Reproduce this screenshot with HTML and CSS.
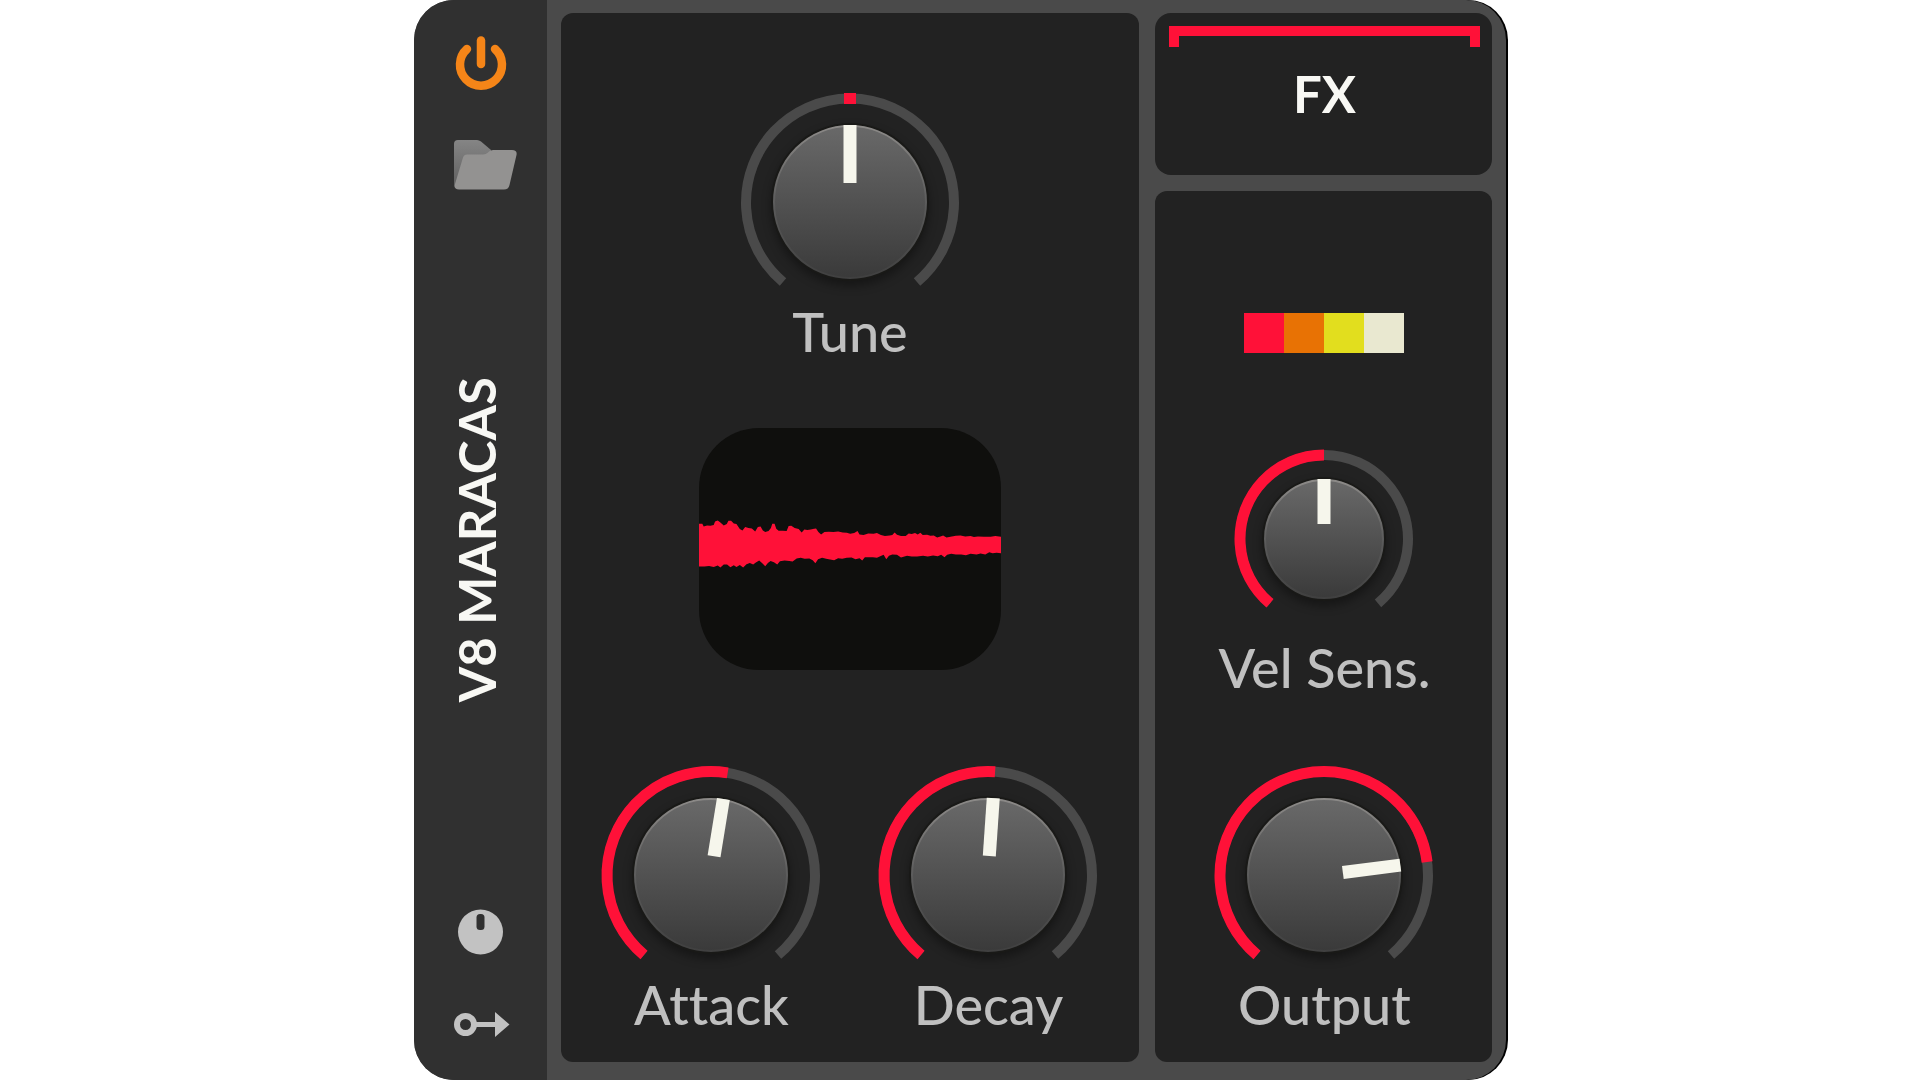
FILE: index.html
```html
<!DOCTYPE html>
<html lang="en">
<head>
  <meta charset="UTF-8">
  <meta name="viewport" content="width=device-width, initial-scale=1.0">
  <title>V8 Maracas</title>
  <link rel="stylesheet" href="styles.css">
</head>
<body>
  <!-- gradients shared by all knobs -->
  <svg class="defs" width="0" height="0" aria-hidden="true">
    <defs>
      <linearGradient id="cap-fill" x1="0" y1="0" x2="0" y2="1">
        <stop offset="0" stop-color="#696969"/>
        <stop offset="1" stop-color="#3a3a3a"/>
      </linearGradient>
      <linearGradient id="cap-rim" x1="0" y1="0" x2="0" y2="1">
        <stop offset="0" stop-color="#8c8a88"/>
        <stop offset="0.5" stop-color="#5c5c5c"/>
        <stop offset="1" stop-color="#404040"/>
      </linearGradient>
      <linearGradient id="folder-back" x1="0" y1="0" x2="0" y2="1">
        <stop offset="0" stop-color="#858585"/>
        <stop offset="1" stop-color="#5e5e5e"/>
      </linearGradient>
    </defs>
  </svg>
  <main class="device">
    <aside class="sidebar">
      <div class="tools">
        <button class="tool" aria-label="Power">
          <svg width="72" height="54" viewBox="0 0 72 54" fill="none" stroke="#f58518" stroke-width="8.5" stroke-linecap="round">
            <path d="M22 13 A21 21 0 1 0 50 13"/>
            <path d="M36 4.5 V28"/>
          </svg>
        </button>
        <button class="tool" aria-label="Open preset">
          <svg width="72" height="52" viewBox="0 0 72 52">
            <path d="M9 5 Q9 1 13 1 H32 Q34 1 36 2.500 L46 11 V24 L14 50 Q9 50 9 46 Z" fill="url(#folder-back)"/>
            <path d="M22 15.500 H38 Q41 15.500 43 13.500 L44 12.500 Q46 11 48 11 H67 Q72.500 11 71.500 16 L64.500 46 Q63.500 50.500 59 50.500 H14 Q8.500 50.500 10 45 L18 18.500 Q19 15.500 22 15.500 Z" fill="#939291"/>
          </svg>
        </button>
      </div>
      <h1 class="title">V8 MARACAS</h1>
      <div class="tools tools-bottom">
        <button class="tool" aria-label="Remote controls">
          <svg width="72" height="46" viewBox="0 0 72 46">
            <circle cx="35.500" cy="23" r="22.500" fill="#c2c2c2"/>
            <rect x="31.500" y="5" width="8" height="16" rx="3.500" fill="#303030"/>
          </svg>
        </button>
        <button class="tool" aria-label="Modulation">
          <svg width="72" height="40" viewBox="0 0 72 40">
            <circle cx="20.500" cy="20.500" r="8.500" fill="none" stroke="#c2c2c2" stroke-width="6"/>
            <path d="M31 18 H50 V8 L64.500 20.500 L50 33 V23 H31 Z" fill="#c2c2c2"/>
          </svg>
        </button>
      </div>
    </aside>
    <div class="panels">
      <section class="panel panel-main">
        <div class="knob" style="--value: 50">
          <div class="dial">
            <svg width="218" height="200" viewBox="-109 -109 218 200">
              <path class="track" d="M-67 80 A104 104 0 1 1 67 80"/>
              <rect class="center-mark" x="-6" y="-109" width="12" height="11"/>
              <circle class="cap-shadow" r="79"/>
              <circle class="cap" r="76"/>
              <rect class="pointer" x="-6.500" y="-77" width="13" height="58"/>
            </svg>
            <input type="range" id="tune" min="0" max="100" step="0.1" value="50">
          </div>
          <label for="tune">Tune</label>
        </div>
        <div class="display">
          <svg viewBox="28 23 903 723" preserveAspectRatio="none" aria-hidden="true">
            <polygon fill="#ff1138" points="28,309 38,309 42,317 52,314 62,315 72,313 76,302 84,299 92,305 102,314 111,310 116,300 124,300 132,308 140,310 150,325 158,329 166,319 176,322 186,323 196,332 204,319 212,317 219,329 226,334 236,331 243,322 247,309 254,309 259,324 266,330 278,330 290,331 296,316 304,315 314,322 326,325 335,335 343,326 352,328 362,326 372,324 378,323 385,334 393,341 403,334 416,333 430,334 444,332 458,335 470,336 480,339 492,337 502,331 508,341 520,343 534,338 550,339 560,337 572,343 584,346 598,344 606,343 613,335 620,342 632,346 646,346 655,338 664,340 674,337 682,341 690,336 697,343 710,342 720,345 730,344 740,350 750,347 758,344 768,350 780,348 796,345 810,344 824,347 840,346 850,349 862,347 880,348 900,348 914,346 931,348 931,397 918,396 906,397 896,394 884,401 870,398 858,401 840,399 826,403 812,401 796,401 782,399 770,402 762,409 752,402 742,406 728,404 712,407 698,405 680,407 664,407 650,405 632,410 620,402 606,401 596,405 588,415 580,402 570,406 560,411 548,409 536,409 524,409 516,419 508,412 496,415 484,410 470,411 456,414 444,412 432,418 420,416 408,414 396,411 384,415 376,427 368,418 358,413 344,414 332,411 320,413 308,422 298,420 284,419 270,421 262,431 252,424 242,420 234,426 226,436 218,428 208,419 198,425 190,431 180,426 170,430 160,440 150,432 140,438 132,433 122,439 112,431 102,431 92,440 84,434 72,438 58,435 44,437 28,437"/>
          </svg>
        </div>
        <div class="knob-row">
          <div class="knob" style="--value: 53.3">
            <div class="dial">
              <svg width="218" height="200" viewBox="-109 -109 218 200">
                <path class="track" d="M-67 80 A104 104 0 1 1 67 80"/>
                <path class="fill" pathLength="100" d="M-67 80 A104 104 0 1 1 67 80"/>
                <circle class="cap-shadow" r="79"/>
                <circle class="cap" r="76"/>
                <rect class="pointer" x="-6.500" y="-77" width="13" height="58"/>
              </svg>
              <input type="range" id="attack" min="0" max="100" step="0.1" value="53.3">
            </div>
            <label for="attack">Attack</label>
          </div>
          <div class="knob" style="--value: 51.4">
            <div class="dial">
              <svg width="218" height="200" viewBox="-109 -109 218 200">
                <path class="track" d="M-67 80 A104 104 0 1 1 67 80"/>
                <path class="fill" pathLength="100" d="M-67 80 A104 104 0 1 1 67 80"/>
                <circle class="cap-shadow" r="79"/>
                <circle class="cap" r="76"/>
                <rect class="pointer" x="-6.500" y="-77" width="13" height="58"/>
              </svg>
              <input type="range" id="decay" min="0" max="100" step="0.1" value="51.4">
            </div>
            <label for="decay">Decay</label>
          </div>
        </div>
      </section>
      <div class="side">
        <button class="panel fx">
          <span class="bracket"></span>
          FX
        </button>
        <section class="panel panel-out">
          <div class="swatches">
            <span class="swatch red"></span>
            <span class="swatch orange"></span>
            <span class="swatch yellow"></span>
            <span class="swatch cream"></span>
          </div>
          <div class="knob" style="--value: 50">
            <div class="dial">
              <svg width="180" height="180" viewBox="-90 -90 180 180">
                <path class="track" d="M-54 64.300 A84 84 0 1 1 54 64.300"/>
                <path class="fill" pathLength="100" d="M-54 64.300 A84 84 0 1 1 54 64.300"/>
                <circle class="cap-shadow" r="62"/>
                <circle class="cap" r="59"/>
                <rect class="pointer" x="-6.500" y="-60" width="13" height="45"/>
              </svg>
              <input type="range" id="vel-sens" min="0" max="100" step="0.1" value="50">
            </div>
            <label for="vel-sens">Vel Sens.</label>
          </div>
          <div class="knob" style="--value: 79.5">
            <div class="dial">
              <svg width="218" height="200" viewBox="-109 -109 218 200">
                <path class="track" d="M-67 80 A104 104 0 1 1 67 80"/>
                <path class="fill" pathLength="100" d="M-67 80 A104 104 0 1 1 67 80"/>
                <circle class="cap-shadow" r="79"/>
                <circle class="cap" r="76"/>
                <rect class="pointer" x="-6.500" y="-77" width="13" height="58"/>
              </svg>
              <input type="range" id="output" min="0" max="100" step="0.1" value="79.5">
            </div>
            <label for="output">Output</label>
          </div>
        </section>
      </div>
    </div>
  </main>
  <script>
    document.querySelectorAll('.knob input').forEach(input => {
      input.addEventListener('input', () => {
        input.closest('.knob').style.setProperty('--value', input.value);
      });
    });
  </script>
</body>
</html>
```

FILE: styles.css
```css
* {
  box-sizing: border-box;
}
body {
  margin: 0;
  background-color: #fff;
  font-family: Lato, "Open Sans", sans-serif;
  font-variant-ligatures: none;
}
button {
  margin: 0;
  padding: 0;
  border: none;
  background: none;
  font: inherit;
  color: inherit;
  cursor: pointer;
}
svg {
  display: block;
}
.defs {
  position: absolute;
}
.device {
  display: flex;
  max-width: 1092px;
  min-height: 100vh;
  margin: 0 auto;
  background-color: #4a4a4a;
  border-radius: 40px;
  box-shadow: 2px 0 0 #000;
}
.sidebar {
  display: grid;
  grid-template-rows: 1fr auto 1fr;
  justify-items: center;
  flex: none;
  width: 133px;
  padding: 36px 0;
  background-color: #303030;
  border-radius: 40px 0 0 40px;
}
.tools {
  display: flex;
  flex-direction: column;
  gap: 49px;
}
.tools-bottom {
  justify-content: flex-end;
}
.title {
  margin: 0;
  padding-left: 8px;
  writing-mode: vertical-rl;
  transform: rotate(180deg);
  font-size: 51px;
  line-height: 60px;
  font-weight: 700;
  color: #f8f8f4;
  white-space: nowrap;
}
.panels {
  display: grid;
  grid-template-columns: 12fr 7fr;
  gap: 16px;
  flex: 1;
  padding: 13px 14px 18px 14px;
}
.panel {
  background-color: #222;
  border-radius: 12px;
}
.panel-main {
  display: flex;
  flex-direction: column;
  align-items: center;
  padding-top: 80px;
}
.side {
  display: flex;
  flex-direction: column;
  gap: 16px;
}
.fx {
  display: flex;
  flex-direction: column;
  align-items: center;
  height: 162px;
  padding: 13px 12px 13px 14px;
  border-radius: 16px;
  font-size: 51px;
  line-height: 60px;
  font-weight: 700;
  color: #f8f8f4;
}
.bracket {
  width: 100%;
  height: 21px;
  margin-bottom: 17px;
  border: 10px solid #ff1138;
  border-bottom: none;
}
.panel-out {
  display: flex;
  flex-direction: column;
  align-items: center;
  flex: 1;
  padding: 122px 0 0 2px;
}
.swatches {
  display: flex;
  margin-bottom: 96px;
}
.swatch {
  width: 40px;
  height: 40px;
}
.red {
  background-color: #ff1138;
}
.orange {
  background-color: #e87204;
}
.yellow {
  background-color: #e2de1e;
}
.cream {
  background-color: #e9e8d0;
}
.panel-out .knob + .knob {
  margin-top: 68px;
}
.display {
  width: 302px;
  height: 242px;
  margin: 66px 0 96px;
  background-color: #0f0f0d;
  border-radius: 60px;
  overflow: hidden;
}
.display svg {
  width: 100%;
  height: 100%;
}
.knob-row {
  display: flex;
  gap: 59px;
}
.knob {
  display: flex;
  flex-direction: column;
  align-items: center;
  gap: 9px;
}
.knob label {
  font-size: 54px;
  line-height: 60px;
  font-weight: 500;
  color: #c0c0c0;
  white-space: nowrap;
}
.dial {
  position: relative;
}
.dial svg {
  overflow: visible;
}
.dial input {
  position: absolute;
  inset: 0;
  width: 100%;
  height: 100%;
  margin: 0;
  opacity: 0;
  cursor: pointer;
}
.track {
  fill: none;
  stroke: #4a4a4a;
  stroke-width: 10px;
}
.fill {
  fill: none;
  stroke: #ff1138;
  stroke-width: 11px;
  stroke-dasharray: calc(var(--value) * 1px) 200px;
}
.center-mark {
  fill: #ff1138;
}
.cap-shadow {
  fill: #191917;
  filter: drop-shadow(0 5px 5px rgba(0, 0, 0, 0.35));
}
.cap {
  fill: url(#cap-fill);
  stroke: url(#cap-rim);
  stroke-width: 2px;
}
.pointer {
  fill: #f6f6ec;
  transform: rotate(calc((var(--value) - 50) * 2.8deg));
}
```
